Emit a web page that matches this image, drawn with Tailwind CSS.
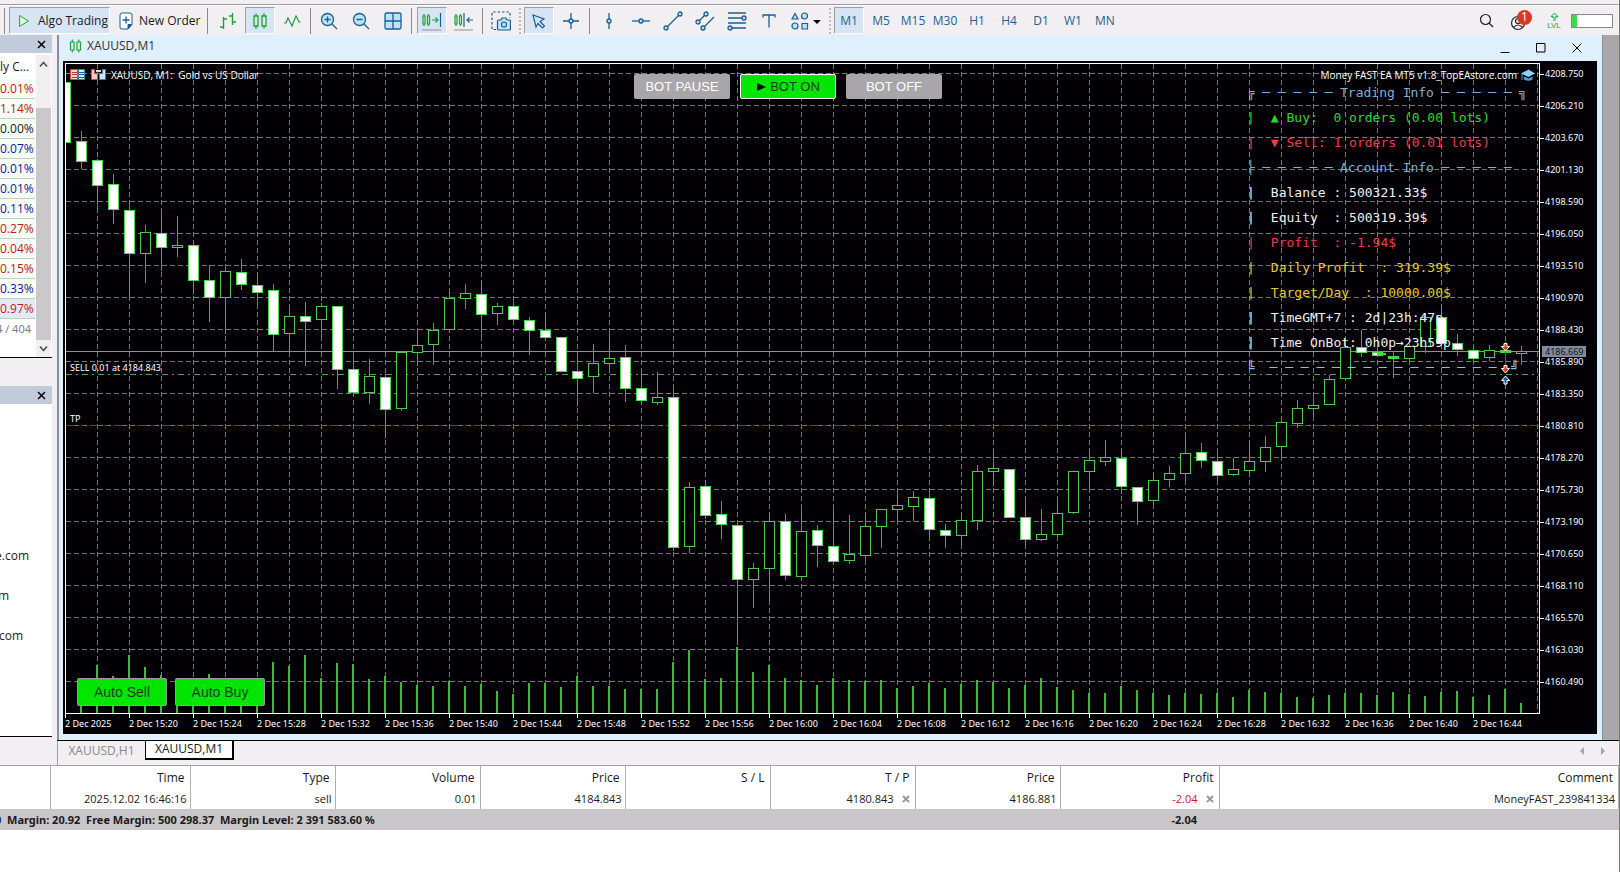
<!DOCTYPE html>
<html lang="en">
<head>
<meta charset="utf-8">
<title>XAUUSD,M1</title>
<script src="https://cdn.jsdelivr.net/npm/@tailwindcss/browser@4"></script>
</head>
<body class="bg-[#f1eff1] font-['Open_Sans','Noto_Sans',sans-serif] text-[12px] leading-4 text-[#1a1a1a]">
<div class="flex min-h-screen flex-col overflow-hidden border-r border-[#3a8ac4]">

  <!-- Toolbar -->
  <div class="h-[5px] border-b border-[#a09ea0]"></div>
  <header class="flex h-[30px] items-center border-t border-white text-[#1f5f93]">
    <div class="ml-1 h-[26px] w-px bg-[#8c8a8c]"></div>
    <button class="ml-1 flex h-[27px] w-[101px] items-center border border-t-[#a0a0a8] border-l-[#a0a0a8] border-r-white border-b-white bg-[#d7e4f4] pl-2 text-[#1a1a1a]">
      <svg class="h-4 w-3 shrink-0" viewBox="0 0 12 16" fill="#d9f5dd" stroke="#22a83c"><path d="M1.5 2.5v11l9-5.500z"/></svg>
      <span class="ml-2 whitespace-nowrap">Algo Trading</span>
    </button>
    <button class="ml-[9px] flex h-[27px] w-[84px] items-center text-[#1a1a1a]">
      <svg class="h-[18px] w-[14px] shrink-0" viewBox="0 0 14 18" fill="#fff" stroke="#1c5d94"><path d="M3 1h8q2 0 2 2v9l-4 5H3q-2 0-2-2V3q0-2 2-2z"/><path fill="#1c5d94" d="M9 17v-4.500h4z"/><path d="M7 4.500v7M3.500 8h7" stroke-width="1.300"/></svg>
      <span class="ml-[6px] whitespace-nowrap">New Order</span>
    </button>
    <div class="ml-1 h-[26px] w-px bg-[#8c8a8c]"></div>
    <div class="ml-1 flex">
      <button aria-label="Bar chart" class="flex h-[27px] w-8 items-center justify-center"><svg width="18" height="18" fill="none" stroke="#22a03a" stroke-width="1.400"><path d="M4.500 5v12M1 15h3.500M4.500 7H8M13.500 1v12M10 4h3.500M13.500 10H17"/></svg></button>
      <button aria-label="Candlesticks" class="mx-px flex h-[27px] w-[30px] items-center justify-center border border-t-[#a0a0a8] border-l-[#a0a0a8] border-r-white border-b-white bg-[#d7e4f4]"><svg width="16" height="18" fill="#d6f7da" stroke="#22a03a" stroke-width="1.300"><path d="M2 4h4v10H2zM4 1.500V4M4 14v3M10 4h4v10h-4zM12 1v3M12 14v2.500"/></svg></button>
      <button aria-label="Line chart" class="flex h-[27px] w-8 items-center justify-center"><svg width="18" height="18" fill="none" stroke="#22a03a" stroke-width="1.200"><path d="M1 11h2l2-5 4 8 4-10 3 6h1.500"/></svg></button>
    </div>
    <div class="mx-[2px] h-[26px] w-px bg-[#8c8a8c]"></div>
    <div class="flex">
      <button aria-label="Zoom in" class="flex h-[27px] w-8 items-center justify-center"><svg width="18" height="18" fill="#bfe3fb" stroke="#1c5d94" stroke-width="1.300"><circle cx="7.500" cy="7.500" r="6"/><path d="M12 12l5 5M7.500 4.500v6M4.500 7.500h6"/></svg></button>
      <button aria-label="Zoom out" class="flex h-[27px] w-8 items-center justify-center"><svg width="18" height="18" fill="#bfe3fb" stroke="#1c5d94" stroke-width="1.300"><circle cx="7.500" cy="7.500" r="6"/><path d="M12 12l5 5M4.500 7.500h6"/></svg></button>
      <button aria-label="Tile windows" class="flex h-[27px] w-8 items-center justify-center"><svg width="18" height="18" fill="#bfe3fb" stroke="#1c5d94" stroke-width="1.300"><rect x="1" y="1" width="16" height="16" rx="1.500"/><path d="M9 1v16M1 9h16"/></svg></button>
    </div>
    <div class="ml-[2px] mr-1 h-[26px] w-px bg-[#8c8a8c]"></div>
    <div class="flex">
      <button aria-label="Auto scroll" class="mx-px flex h-[27px] w-[30px] items-center justify-center border border-t-[#a0a0a8] border-l-[#a0a0a8] border-r-white border-b-white bg-[#d7e4f4]"><svg width="20" height="20" fill="#d6f7da" stroke="#22a03a" stroke-width="1.200"><path d="M1 5h2v8H1zM2 3v2M2 13v2M5.500 5h2v8h-2zM6.500 3v2M6.500 13v2M10 9h6M13.500 6.500L16 9l-2.500 2.500"/><path stroke="#1c5d94" d="M18.500 2v14"/><path stroke="#a0a0a0" d="M0 19h19"/></svg></button>
      <button aria-label="Chart shift" class="flex h-[27px] w-8 items-center justify-center"><svg width="20" height="20" fill="#d6f7da" stroke="#22a03a" stroke-width="1.200"><path d="M1 5h2v8H1zM2 3v2M2 13v2M5.500 5h2v8h-2zM6.500 3v2M6.500 13v2"/><path stroke="#1c5d94" fill="none" d="M10 2v14M12.500 9H19M15.500 6.500L13 9l2.500 2.500"/><path stroke="#a0a0a0" d="M0 19h19"/></svg></button>
    </div>
    <div class="mx-[2px] h-[26px] w-px bg-[#8c8a8c]"></div>
    <button aria-label="Screenshot" class="flex h-[27px] w-8 items-center justify-center"><svg width="20" height="20" fill="none" stroke="#1c5d94" stroke-width="1.200"><path stroke-dasharray="2.500 2" d="M5 18.500H1V1h18v6"/><path fill="#bfe3fb" d="M6.500 10q0-1 1-1H10l1-2h4l1 2h2.500q1 0 1 1v8q0 1-1 1h-11q-1 0-1-1z"/><circle cx="13" cy="13.500" r="2.500"/></svg></button>
    <div class="mx-[2px] h-[26px] w-[2px] border-l-2 border-dotted border-[#bcbabc]"></div>
    <div class="flex">
      <button aria-label="Cursor" class="mx-px flex h-[27px] w-[30px] items-center justify-center border border-t-[#a0a0a8] border-l-[#a0a0a8] border-r-white border-b-white bg-[#d7e4f4]"><svg width="16" height="16" fill="#cfe8fb" stroke="#1c5d94" stroke-width="1.200"><path d="M2 2l11 4-4 2.500 4.500 4.500-2 2L7 10.500 5 14z"/></svg></button>
      <button aria-label="Crosshair" class="flex h-[27px] w-8 items-center justify-center"><svg width="18" height="18" fill="#bfe3fb" stroke="#1c5d94" stroke-width="1.300"><path d="M9 1v16M1 9h16"/><circle cx="9" cy="9" r="2"/></svg></button>
    </div>
    <div class="ml-[2px] mr-[3px] h-[26px] w-px bg-[#8c8a8c]"></div>
    <div class="flex">
      <button aria-label="Vertical line" class="flex h-[27px] w-8 items-center justify-center"><svg width="18" height="18" fill="#bfe3fb" stroke="#1c5d94" stroke-width="1.300"><path d="M9 1v16"/><circle cx="9" cy="9" r="2"/></svg></button>
      <button aria-label="Horizontal line" class="flex h-[27px] w-8 items-center justify-center"><svg width="18" height="18" fill="#bfe3fb" stroke="#1c5d94" stroke-width="1.300"><path d="M0 9h18"/><circle cx="9" cy="9" r="2"/></svg></button>
      <button aria-label="Trendline" class="flex h-[27px] w-8 items-center justify-center"><svg width="20" height="20" fill="#bfe3fb" stroke="#1c5d94" stroke-width="1.300"><path d="M3 17L17 3"/><circle cx="3" cy="17" r="2"/><circle cx="17" cy="3" r="2"/></svg></button>
      <button aria-label="Equidistant channel" class="flex h-[27px] w-8 items-center justify-center"><svg width="20" height="20" fill="#bfe3fb" stroke="#1c5d94" stroke-width="1.300"><path d="M3 11l8-8M8 17L19 6"/><circle cx="3" cy="11" r="2"/><circle cx="11" cy="3" r="2"/><circle cx="8" cy="17" r="2"/></svg></button>
      <button aria-label="Fibonacci" class="flex h-[27px] w-8 items-center justify-center"><svg width="20" height="20" fill="#bfe3fb" stroke="#1c5d94" stroke-width="1.300"><path d="M1 2h18M1 7h15M1 12h18M3 17h16"/><circle cx="17" cy="7" r="2"/><circle cx="3" cy="17" r="2"/></svg></button>
      <button aria-label="Text" class="flex h-[27px] w-8 items-center justify-center"><svg width="14" height="14" fill="none" stroke="#1c5d94" stroke-width="1.300"><path d="M1 3.500V1h12v2.500M7 1v12.500"/></svg></button>
      <button aria-label="Shapes" class="flex h-[27px] w-[44px] items-center pl-[6px]"><svg width="30" height="18" fill="#bfe3fb" stroke="#1c5d94" stroke-width="1.200"><path d="M4 1.500L7 7H1z"/><circle cx="13.500" cy="4" r="3"/><circle cx="4" cy="14" r="3"/><path d="M11 11.500h5.500v5.500H11z"/><path fill="#000" stroke="none" d="M22 8h8l-4 4z"/></svg></button>
    </div>
    <div class="mr-[2px] h-[26px] w-[2px] border-l-2 border-dotted border-[#bcbabc]"></div>
    <div class="flex">
      <button class="mx-px h-[27px] w-[30px] border border-t-[#a0a0a8] border-l-[#a0a0a8] border-r-white border-b-white bg-[#d7e4f4]">M1</button>
      <button class="h-[27px] w-8">M5</button>
      <button class="h-[27px] w-8">M15</button>
      <button class="h-[27px] w-8">M30</button>
      <button class="h-[27px] w-8">H1</button>
      <button class="h-[27px] w-8">H4</button>
      <button class="h-[27px] w-8">D1</button>
      <button class="h-[27px] w-8">W1</button>
      <button class="h-[27px] w-8">MN</button>
    </div>
    <div class="ml-auto flex items-center pr-[6px]">
      <button aria-label="Search" class="mr-4"><svg width="15" height="15" fill="none" stroke="#222" stroke-width="1.200"><circle cx="6.500" cy="6.500" r="5"/><path d="M10 10l4 4"/></svg></button>
      <button aria-label="Account, 1 notification" class="relative mr-[5px] h-[22px] w-[26px]">
        <svg width="16" height="16" class="mt-[4px]" fill="none" stroke="#222" stroke-width="1.200"><circle cx="8" cy="8" r="6.500"/><circle cx="8" cy="6" r="2.500"/><path d="M3.500 12.500q4.500-5 9 0"/></svg>
        <span class="absolute top-0 right-1 flex h-[15px] w-[15px] items-center justify-center rounded-full bg-[#d9391f] text-[12px] text-white">1</span>
      </button>
      <div class="flex w-[26px] flex-col items-center text-[8px] leading-[9px] text-[#1ea838]">
        <svg width="9" height="9" fill="#d6f7da" stroke="#1ea838"><path d="M4.500 1L8 4.500H6V6H3V4.500H1zM3 8h3"/></svg>
        <span class="font-['Liberation_Sans',sans-serif]">LVL</span>
      </div>
      <div class="ml-1 h-[14px] w-[42px] border border-[#888] bg-white"><div class="h-full w-[5px] bg-[#3fd84a]"></div></div>
    </div>
  </header>

  <!-- Side panels and chart window -->
  <main class="flex flex-1">
    <aside class="flex w-[52px] shrink-0 flex-col pb-7">
      <div class="flex h-[18px] items-center justify-end bg-[#c1cbdb] pr-[6px]"><button aria-label="Close market watch"><svg width="9" height="9" stroke="#000" stroke-width="1.500"><path d="M1 1l7 7M8 1L1 8"/></svg></button></div>
      <div class="flex h-[305px] border-b border-black bg-white pt-[2px]">
        <div class="w-[35px] overflow-hidden text-right text-[#c0181e] [&>div]:h-5 [&>div]:border-b [&>div]:border-[#c4ccc4] [&>div]:bg-[#f5fdf5] [&>div]:pr-1 [&>div]:leading-5">
          <p class="h-6 pr-[6px] leading-6 whitespace-nowrap text-[#1a1a1a]">ly C...</p>
          <div>0.01%</div><div>1.14%</div><div class="text-[#1a1a1a]">0.00%</div><div class="text-[#1414a0]">0.07%</div><div class="text-[#1414a0]">0.01%</div><div class="text-[#1414a0]">0.01%</div><div class="text-[#1414a0]">0.11%</div><div>0.27%</div><div>0.04%</div><div>0.15%</div><div class="text-[#1414a0]">0.33%</div>
          <p class="h-5 border-b border-[#c4ccc4] bg-[#e3eaf6] pr-1 leading-5">0.97%</p>
          <p class="flex h-5 justify-end pr-1 text-[11px] leading-5 whitespace-nowrap text-[#777]">4 / 404</p>
        </div>
        <div class="ml-px flex w-[15px] flex-col bg-[#f1eff1]">
          <svg class="mt-1 h-[10px] w-[15px]" fill="none" stroke="#555" stroke-width="1.800"><path d="M4 7.500l3.500-4L11 7.500"/></svg>
          <div class="mt-[39px] flex-1 bg-[#cac8ca]"></div>
          <svg class="mt-1 mb-[3px] h-[10px] w-[15px]" fill="none" stroke="#555" stroke-width="1.800"><path d="M4 2.500l3.500 4L11 2.500"/></svg>
        </div>
      </div>
      <div class="mt-7 flex h-[18px] items-center justify-end bg-[#c1cbdb] pr-[6px]"><button aria-label="Close navigator"><svg width="9" height="9" stroke="#000" stroke-width="1.500"><path d="M1 1l7 7M8 1L1 8"/></svg></button></div>
      <div class="flex-1 border-b border-black bg-white pt-[132px] leading-10">
        <div class="flex w-[29px] justify-end">e.com</div>
        <div class="flex w-[9px] justify-end">m</div>
        <div class="flex w-[23px] justify-end">.com</div>
      </div>
    </aside>

    <section class="ml-[5px] flex min-w-0 flex-1 flex-col">
      <div class="flex flex-1 border-b border-black bg-[#a9a7a9]">
        <div class="flex min-w-0 flex-1 flex-col border-r border-l-2 border-[#8a8e98] bg-[#e0effe]">
          <div class="flex h-[26px] items-center pl-[10px]">
            <div class="flex items-center pb-1">
              <svg width="13" height="16" fill="#d6f7da" stroke="#22a03a" stroke-width="1.200"><path d="M1.500 4h3.500v8H1.500zM3.300 1.500V4M3.300 12v2.500M8 4h3.500v8H8zM9.800 1.500V4M9.800 12v2.500"/></svg>
              <h1 class="ml-[5px] text-[#333]">XAUUSD,M1</h1>
            </div>
            <div class="ml-auto flex gap-[26px] pr-5">
              <button aria-label="Minimize"><svg width="10" height="10" stroke="#000"><path d="M0.500 9.500h9"/></svg></button>
              <button aria-label="Maximize"><svg width="10" height="10" fill="none" stroke="#000"><path d="M.5.5h8.500v8.500H.5z"/></svg></button>
              <button aria-label="Close"><svg width="10" height="10" stroke="#000"><path d="M.5.5l9 9M9.500.5l-9 9"/></svg></button>
            </div>
          </div>

          <div class="mr-[5px] mb-[6px] ml-1 flex flex-1 flex-col bg-[#020004] pt-[2px] pl-[2px] font-['Noto_Sans',sans-serif] text-[9px] text-white">
            <div class="flex flex-1">
              <div class="relative min-w-0 flex-1 overflow-hidden border border-white">
                <svg class="absolute inset-0 h-full w-full" shape-rendering="crispEdges">
                  <g transform="translate(-66 -64)" fill="none">
                    <path id="grid" stroke="#74787f" stroke-dasharray="5 3"/>
                    <path d="M66 351.500h1480" stroke="#8a909c"/>
                    <path d="M66 374.500h1480" stroke="#549a58" stroke-dasharray="6 4 2 4"/>
                    <path d="M66 425.500h1480" stroke="#c01c24" stroke-dasharray="9 6 3 6"/>
                    <path id="volume" stroke="#3cb83c" stroke-width="2"/>
                    <path id="wicks" stroke="#34b434"/>
                    <path id="up" fill="#020004" stroke="#4cc850"/>
                    <path id="down" fill="#fff" stroke="#4cd850"/>
                    <path d="M1377 353.500h9M1388 357.500h11M1500 351.500h11" stroke="#30e830" stroke-width="2"/>
                    <path d="M1505.500 349v20" stroke="#c83820"/>
                    <g shape-rendering="geometricPrecision" stroke="#fff"><path fill="#d8402a" d="M1504 343.500h3v3h2.500l-4 4.500-4-4.500h2.500zM1504 365.500h3v3h2.500l-4 4.500-4-4.500h2.500z"/><path fill="#1c5d94" d="M1504 384h3v-3.500h2.500l-4-4.500-4 4.500h2.500z"/></g>
                  </g>
                </svg>

                <div class="relative flex items-center justify-between px-1 pt-[3px] font-['Open_Sans',sans-serif]">
                  <div class="flex items-center">
                    <svg width="16" height="12"><path fill="#fbd3cf" stroke="#d0463a" d="M.5.500h7v10h-7z"/><path fill="#d3ecfb" stroke="#2f86bd" d="M8.500.500h6v10h-6z"/><path stroke="#c0352b" d="M2 3.500h5M2 5.500h5M2 8.500h5"/><path stroke="#1c5d94" d="M9 3.500h5M9 5.500h5M9 8.500h5"/></svg>
                    <svg width="16" height="12" class="ml-[5px]"><path fill="#fbc9c2" stroke="#d0463a" d="M.5.500h3v4h3v6h-6z"/><path fill="#c9e8fb" stroke="#2f86bd" d="M14.500.500h-3v4h-3v6h6z"/><path stroke="#ddd" stroke-width="2" d="M5 2h5"/></svg>
                    <span class="ml-1 text-[10px] whitespace-pre">XAUUSD, M1:  Gold vs US Dollar</span>
                  </div>
                  <div class="flex items-center text-[10px]">
                    <span>Money FAST EA MT5 v1.8_TopEAstore.com</span>
                    <svg width="14" height="12" class="ml-1"><path fill="#8fd0f8" d="M0 4.500L7.500.500 14 4.500 7.500 8z"/><path fill="#4aa3dc" d="M3 7.500l4.500 2 4-2v3q-4 2.500-8.500 0z"/><path stroke="#4aa3dc" d="M1 5v6"/></svg>
                  </div>
                </div>

                <div class="absolute top-[10px] left-[568px] flex gap-[10px] font-['Liberation_Sans',sans-serif] text-[13px]">
                  <button class="h-[25px] w-24 rounded-[2px] bg-[#a8a6a9]">BOT PAUSE</button>
                  <button class="flex h-[25px] w-24 items-center justify-center gap-1 rounded-[2px] border border-white bg-[#00e600] text-[#0c3c0c]"><svg width="10" height="8"><path d="M1 0l9 4-9 4z"/></svg>BOT ON</button>
                  <button class="h-[25px] w-24 rounded-[2px] bg-[#a8a6a9]">BOT OFF</button>
                </div>

                <div class="absolute top-4 right-3 w-[280px] font-['DejaVu_Sans_Mono',monospace] text-[13px] leading-[25px] text-[#f0f0f0] [&_span]:whitespace-pre">
                  <div class="flex justify-between text-[#7fb0d4]"><span>╔</span><span>─ ─ ─ ─ ─</span><span>Trading Info</span><span>─ ─ ─ ─ ─</span><span>╗</span></div>
                  <div class="flex gap-4 text-[#22dd2c]"><span>|</span><span>▲ Buy:  0 orders (0.00 lots)</span></div>
                  <div class="flex gap-4 text-[#e8404a]"><span>|</span><span>▼ Sell: 1 orders (0.01 lots)</span></div>
                  <div class="flex justify-between text-[#7fb0d4]"><span>├</span><span>─ ─ ─ ─ ─</span><span>Account Info</span><span>─ ─ ─ ─ ─</span><span> </span></div>
                  <div class="flex gap-4"><span>|</span><span>Balance : 500321.33$</span></div>
                  <div class="flex gap-4"><span>|</span><span>Equity  : 500319.39$</span></div>
                  <div class="flex gap-4 text-[#e8404a]"><span>|</span><span>Profit  : -1.94$</span></div>
                  <div class="flex gap-4 text-[#e8c832]"><span>|</span><span>Daily Profit  : 319.39$</span></div>
                  <div class="flex gap-4 text-[#e8c832]"><span>|</span><span>Target/Day  : 10000.00$</span></div>
                  <div class="flex gap-4"><span>|</span><span>TimeGMT+7 : 2d|23h:47p</span></div>
                  <div class="flex gap-4"><span>|</span><span>Time OnBot: 0h0p→23h59p</span></div>
                  <div class="flex justify-between pr-2 text-[#8fbce4]"><span>╚</span><span>─ ─ ─ ─ ─ ─ ─ ─ ─ ─ ─ ─ ─ ─ ─</span><span>╝</span></div>
                </div>

                <span class="absolute top-[296px] left-1">SELL 0.01 at 4184.843</span>
                <span class="absolute top-[347px] left-1">TP</span>

                <div class="absolute bottom-[7px] left-[11px] flex gap-2 font-['Liberation_Sans',sans-serif] text-[14px] text-[#0c3c0c]">
                  <button class="h-7 w-[90px] rounded-[2px] border border-[#9a9a9a] bg-[#00e600]">Auto Sell</button>
                  <button class="h-7 w-[90px] rounded-[2px] border border-[#9a9a9a] bg-[#00e600]">Auto Buy</button>
                </div>
              </div>

              <div class="relative flex w-[57px] shrink-0 flex-col gap-4 pt-[3px] [&>span]:flex [&>span]:h-4 [&>span]:items-center [&>span]:gap-px [&>span]:before:h-px [&>span]:before:w-1 [&>span]:before:bg-white">
                <span>4208.750</span><span>4206.210</span><span>4203.670</span><span>4201.130</span><span>4198.590</span><span>4196.050</span><span>4193.510</span><span>4190.970</span><span>4188.430</span><span>4185.890</span><span>4183.350</span><span>4180.810</span><span>4178.270</span><span>4175.730</span><span>4173.190</span><span>4170.650</span><span>4168.110</span><span>4165.570</span><span>4163.030</span><span>4160.490</span>
                <div class="absolute top-[283px] left-[2px] w-11 bg-[#7f8a9c] pl-[3px] leading-[11px] text-[#10141c]">4186.669</div>
              </div>
            </div>
            <div class="flex h-5 overflow-hidden leading-5 whitespace-nowrap [&>span]:w-16 [&>span]:shrink-0 [&>span]:before:block [&>span]:before:h-1 [&>span]:before:-mb-1 [&>span]:before:w-px [&>span]:before:bg-white">
              <span>2 Dec 2025</span><span>2 Dec 15:20</span><span>2 Dec 15:24</span><span>2 Dec 15:28</span><span>2 Dec 15:32</span><span>2 Dec 15:36</span><span>2 Dec 15:40</span><span>2 Dec 15:44</span><span>2 Dec 15:48</span><span>2 Dec 15:52</span><span>2 Dec 15:56</span><span>2 Dec 16:00</span><span>2 Dec 16:04</span><span>2 Dec 16:08</span><span>2 Dec 16:12</span><span>2 Dec 16:16</span><span>2 Dec 16:20</span><span>2 Dec 16:24</span><span>2 Dec 16:28</span><span>2 Dec 16:32</span><span>2 Dec 16:36</span><span>2 Dec 16:40</span><span>2 Dec 16:44</span>
            </div>
          </div>
        </div>
        <div class="w-4 shrink-0"></div>
      </div>

      <nav class="flex h-6 items-start border-l border-[#a0a0a0]">
        <a href="#h1" class="w-[87px] pt-[2px] text-center text-[#8a888a]">XAUUSD,H1</a>
        <a href="#m1" class="h-[19px] w-[89px] border-r-2 border-b-2 border-l border-black bg-white text-center">XAUUSD,M1</a>
        <div class="ml-auto flex gap-4 pt-[6px] pr-[13px]">
          <button aria-label="Scroll tabs left"><svg width="5" height="8" fill="#a8a6a8"><path d="M4 0v8L0 4z"/></svg></button>
          <button aria-label="Scroll tabs right"><svg width="5" height="8" fill="#a8a6a8"><path d="M0 0v8l4-4z"/></svg></button>
        </div>
      </nav>
    </section>
  </main>

  <!-- Open positions -->
  <div class="border-t border-[#a0a0a0] bg-white pb-[42px]">
    <table class="w-full table-fixed border-collapse text-right [&_th]:font-normal">
      <colgroup><col class="w-[50px]"><col class="w-[140px]"><col class="w-[145px]"><col class="w-[145px]"><col class="w-[145px]"><col class="w-[145px]"><col class="w-[145px]"><col class="w-[145px]"><col class="w-[159px]"><col></colgroup>
      <thead>
        <tr class="h-[23px] [&>th]:border-r [&>th]:border-[#b0b0b0] [&>th]:pr-[5px]"><th></th><th>Time</th><th>Type</th><th>Volume</th><th>Price</th><th>S / L</th><th>T / P</th><th>Price</th><th>Profit</th><th class="border-r-0">Comment</th></tr>
      </thead>
      <tbody>
        <tr class="h-5 text-[11px] [&>td]:border-r [&>td]:border-[#b0b0b0] [&>td]:pr-[3px]"><td></td><td>2025.12.02 16:46:16</td><td>sell</td><td>0.01</td><td>4184.843</td><td></td>
          <td><div class="flex items-center justify-end gap-2">4180.843<button aria-label="Remove take profit" class="mr-[2px]"><svg width="8" height="8" stroke="#999" stroke-width="2"><path d="M1 1l6 6M7 1L1 7"/></svg></button></div></td>
          <td>4186.881</td>
          <td class="text-[#c8202c]"><div class="flex items-center justify-end gap-2">-2.04<button aria-label="Close position" class="mr-[2px]"><svg width="8" height="8" stroke="#999" stroke-width="2"><path d="M1 1l6 6M7 1L1 7"/></svg></button></div></td>
          <td class="border-r-0">MoneyFAST_239841334</td></tr>
        <tr class="h-[21px] bg-[#c9c7ca] font-['Noto_Sans',sans-serif] text-[11px] font-bold"><td colspan="8" class="text-left whitespace-pre"><div class="-ml-[5px]">0  Margin: 20.92  Free Margin: 500 298.37  Margin Level: 2 391 583.60 %</div></td><td class="pr-[22px]">-2.04</td><td></td></tr>
      </tbody>
    </table>
  </div>
</div>

<script>
// Candle rows: kind (d = filled, u = hollow), high, body top, body bottom, low, volume top.
const candles = `d 82 82 143 143 713|d 131 141 162 169 690|d 159 160 186 210 665|d 174 184 210 224 676|d 202 210 254 296 655|u 225 232 254 283 667|d 213 233 248 271 675|u 216 245 248 257 685|d 243 245 281 294 685|d 265 280 298 322 674|u 268 271 298 334 685|d 259 272 285 290 685|d 273 285 293 304 685|d 284 290 335 351 662|u 307 316 334 351 666|d 302 316 322 366 655|u 303 306 320 338 678|d 306 306 370 389 663|d 355 369 393 396 664|u 359 376 393 404 679|d 374 377 410 438 676|u 352 352 409 411 682|u 332 345 353 366 685|u 323 330 345 365 686|u 292 298 330 332 681|u 284 293 299 309 686|d 280 294 315 336 684|u 303 306 314 325 691|d 297 306 320 320 694|d 317 320 331 355 683|d 313 330 338 340 683|d 337 337 372 372 687|d 357 371 379 406 676|u 344 363 377 393 686|u 333 358 364 372 686|d 345 357 389 402 689|d 370 388 401 402 689|u 372 397 403 405 689|d 388 397 548 551 662|u 482 487 547 553 650|d 480 486 516 519 679|d 501 514 525 539 678|d 522 525 580 643 647|u 563 568 580 608 672|u 513 521 569 601 665|d 514 521 576 580 678|u 507 531 577 579 680|d 525 530 546 567 685|d 507 546 562 563 678|u 515 554 561 564 680|u 513 526 556 560 681|u 509 509 527 548 680|u 490 505 510 521 688|u 491 497 507 521 686|d 489 498 530 539 683|d 524 530 536 548 688|u 513 520 536 545 684|u 465 471 521 530 680|u 453 468 472 486 682|d 469 469 518 518 688|d 501 517 540 546 685|u 509 534 540 541 678|u 501 513 535 536 687|u 471 471 513 514 690|u 453 460 472 488 693|u 440 457 462 466 693|d 448 458 487 494 686|d 487 487 502 525 690|u 473 480 501 504 693|u 466 473 480 487 695|u 435 453 474 481 693|d 443 452 461 468 694|d 451 461 476 480 693|u 458 469 475 476 697|u 441 461 471 476 690|u 436 447 462 472 692|u 421 422 447 456 693|u 400 408 424 428 697|u 394 405 409 416 698|u 375 379 405 405 695|u 338 347 379 379 693|d 330 347 353 357 693|d 336 352 356 356 695|u 352 356 358 378 692|u 345 346 359 362 694|u 313 317 347 353 696|d 304 317 344 347 692|d 334 343 350 356 691|d 347 350 359 361 697|u 345 350 358 361 695|u 342 350 352 352 689|u 346 351 354 365 703`;
let grid = '', volume = '', wicks = '', up = '', down = '';
for (let y = 73; y < 713; y += 32) grid += `M66 ${y}.5h3000`;
for (let x = 97; x < 3000; x += 32) grid += `M${x}.5 64v1500`;
candles.split('|').forEach((row, i) => {
  const [kind, high, top, bottom, low, vol] = row.split(' ');
  const x = 65 + 16 * i;
  volume += `M${x} 713V${vol}`;
  wicks += `M${x}.5 ${high}V${low}`;
  const body = `M${x - 5 + .5} ${+top + .5}h10v${bottom - top - 1}h-10z`;
  if (kind === 'u') up += body; else down += body;
});
for (const [id, d] of Object.entries({ grid, volume, wicks, up, down })) document.getElementById(id).setAttribute('d', d);
</script>
</body>
</html>
